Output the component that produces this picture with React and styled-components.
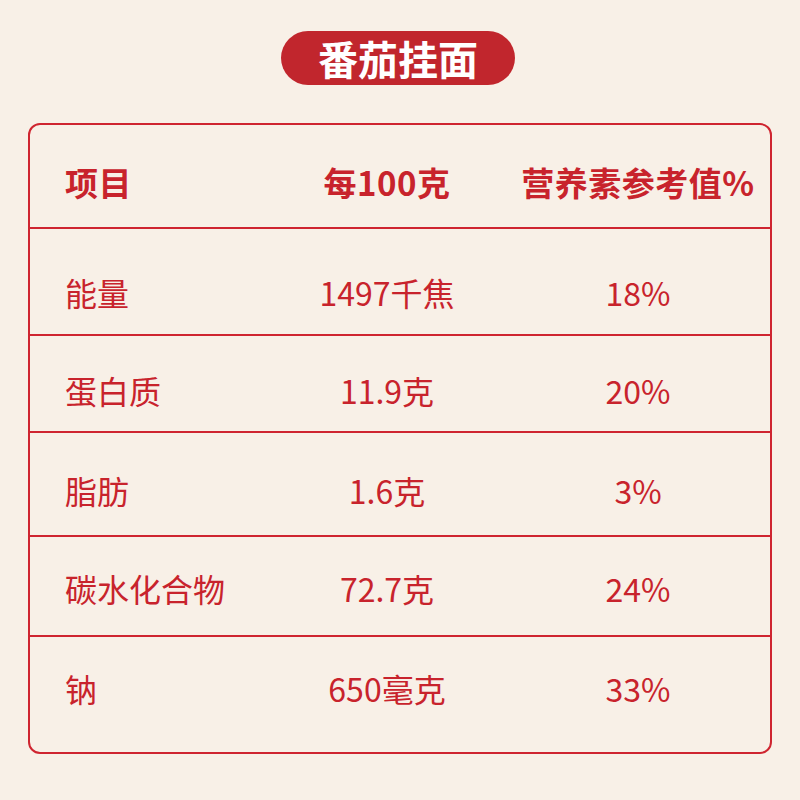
import React from 'react'
import styled, { createGlobalStyle } from 'styled-components'

const GlobalStyle = createGlobalStyle`
  html, body {
    margin: 0;
    padding: 0;
    background: #f8f0e7;
  }
  body {
    font-family: "Noto Sans CJK SC", "Noto Sans", sans-serif;
  }
`

const Page = styled.div`
  width: 800px;
  height: 800px;
  display: flex;
  flex-direction: column;
  align-items: center;
  box-sizing: border-box;
  padding-top: 31px;
`

const Title = styled.div`
  width: 234px;
  height: 54px;
  margin-left: -4px;
  border-radius: 27px;
  background: #c1262d;
  color: #fff;
  font-size: 40px;
  font-weight: 700;
  line-height: 54px;
  text-align: center;
`

const Table = styled.div`
  width: 744px;
  margin-top: 38px;
  border: 2px solid #cf2530;
  border-radius: 12px;
  box-sizing: border-box;
  overflow: hidden;
`

const Row = styled.div`
  display: grid;
  grid-template-columns: 238px 238px 1fr;
  height: ${({ h }) => h}px;
  padding-top: ${({ pad }) => pad}px;
  box-sizing: content-box;
  & + & {
    border-top: 2px solid #cf2530;
  }
`

const Cell = styled.div`
  height: 40px;
  line-height: 40px;
  font-size: ${({ head }) => (head ? 33 : 32)}px;
  color: #c8232c;
  font-weight: ${({ head }) => (head ? 700 : 400)};
  letter-spacing: ${({ head }) => (head ? '0.5px' : '0')};
  white-space: nowrap;
  text-align: ${({ left }) => (left ? 'left' : 'center')};
  padding-left: ${({ left }) => (left ? '35px' : '0')};
`

const rows = [
  { name: '能量', amount: '1497千焦', pct: '18%', h: 105, pad: 43 },
  { name: '蛋白质', amount: '11.9克', pct: '20%', h: 95, pad: 34 },
  { name: '脂肪', amount: '1.6克', pct: '3%', h: 102, pad: 37 },
  { name: '碳水化合物', amount: '72.7克', pct: '24%', h: 98, pad: 31 },
  { name: '钠', amount: '650毫克', pct: '33%', h: 115, pad: 31 },
]

export default function App() {
  return (
    <>
      <GlobalStyle />
      <Page>
        <Title>番茄挂面</Title>
        <Table>
          <Row h={65} pad={37}>
            <Cell head left>项目</Cell>
            <Cell head>每100克</Cell>
            <Cell head>营养素参考值%</Cell>
          </Row>
          {rows.map(r => (
            <Row key={r.name} h={r.h - r.pad} pad={r.pad}>
              <Cell left>{r.name}</Cell>
              <Cell>{r.amount}</Cell>
              <Cell>{r.pct}</Cell>
            </Row>
          ))}
        </Table>
      </Page>
    </>
  )
}
